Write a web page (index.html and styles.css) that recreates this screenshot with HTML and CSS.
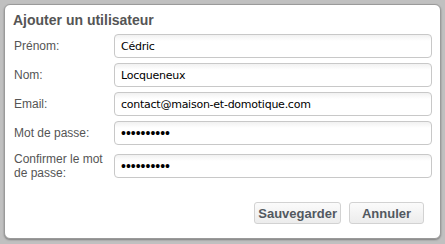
FILE: index.html
```html
<!DOCTYPE html>
<html lang="fr">
<head>
    <meta charset="UTF-8">
    <title>Ajouter un utilisateur</title>
    <link rel="stylesheet" href="styles.css">
</head>
<body>
    <div class="panel">
        <h1 class="title">Ajouter un utilisateur</h1>
        <div class="field">
            <label for="firstname">Prénom:</label>
            <input id="firstname" type="text" value="Cédric">
        </div>
        <div class="field">
            <label for="lastname">Nom:</label>
            <input id="lastname" type="text" value="Locqueneux">
        </div>
        <div class="field">
            <label for="email">Email:</label>
            <input id="email" type="text" value="contact@maison-et-domotique.com">
        </div>
        <div class="field">
            <label for="password">Mot de passe:</label>
            <input id="password" class="pass" type="password" value="motdepasse">
        </div>
        <div class="field field-last">
            <label for="confirm">Confirmer le mot de passe:</label>
            <input id="confirm" class="pass" type="password" value="motdepasse">
        </div>
        <div class="actions">
            <button class="save-button">Sauvegarder</button>
            <button class="cancel-button">Annuler</button>
        </div>
    </div>
</body>
</html>
```

FILE: styles.css
```css
body {
    margin: 0;
    padding: 4px 4px 5px 4px;
    background-color: #c0c0c0;
    font-family: "Liberation Sans", Arial, sans-serif;
}

.panel {
    box-sizing: border-box;
    width: 437px;
    height: 235px;
    display: flex;
    flex-direction: column;
    padding: 7px 8px 14px 9px;
    background-color: #ffffff;
    border: 1px solid #9a9a9a;
    border-radius: 6px;
    box-shadow: 0 1px 2px rgba(0, 0, 0, 0.35);
}

.title {
    margin: 0 0 5px -1px;
    font-size: 14px;
    line-height: 17px;
    font-weight: bold;
    color: #555555;
}

.field {
    display: flex;
    align-items: center;
    margin-bottom: 5px;
}

.field-last {
    margin-top: 2px;
}

.field label {
    width: 100px;
    flex-shrink: 0;
    font-size: 12px;
    line-height: 14px;
    color: #555555;
}

.field input {
    flex: 1;
    box-sizing: border-box;
    height: 24px;
    margin: 0;
    padding: 0 6px;
    border: 1px solid #c8c8c8;
    border-radius: 4px;
    background: linear-gradient(#f1f1f1, #ffffff 6px);
    font-family: "DejaVu Sans", Verdana, sans-serif;
    font-size: 11px;
    letter-spacing: -0.25px;
    color: #000000;
    outline: none;
}

.field input.pass {
    font-family: "Liberation Sans", Arial, sans-serif;
    font-size: 14px;
    letter-spacing: 0;
}

.actions {
    margin-top: auto;
    margin-right: 8px;
    display: flex;
    justify-content: flex-end;
    gap: 8px;
}

.actions button {
    box-sizing: border-box;
    height: 22px;
    min-width: 75px;
    margin: 0;
    padding: 0 3px;
    border: 1px solid #d2d2d2;
    border-radius: 3px;
    background: linear-gradient(#fbfbfb, #ececec);
    font-family: "Liberation Sans", Arial, sans-serif;
    font-size: 13px;
    font-weight: bold;
    color: #525860;
    cursor: pointer;
}
```
